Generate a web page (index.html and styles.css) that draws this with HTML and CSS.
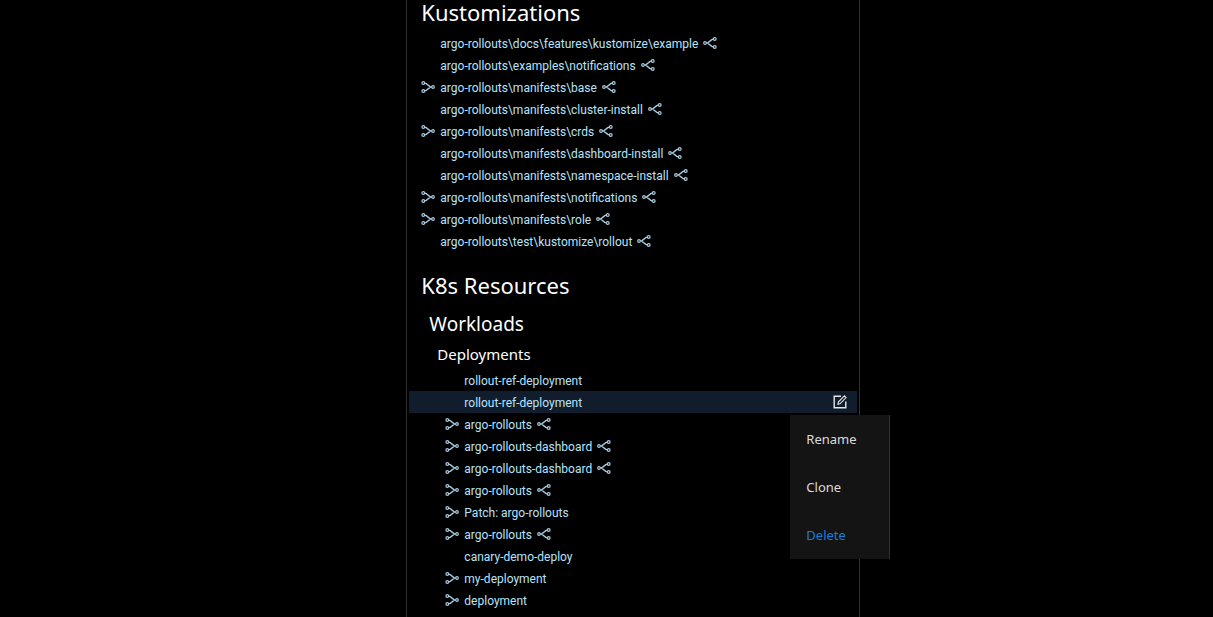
FILE: index.html
```html
<!DOCTYPE html>
<html lang="en">
<head>
<meta charset="utf-8">
<title>Navigator</title>
<link rel="stylesheet" href="styles.css">
</head>
<body>
<svg class="defs" aria-hidden="true">
  <symbol id="out" viewBox="0 0 14 12">
    <g fill="none" stroke="currentColor" stroke-width="1.2">
      <circle cx="2" cy="6" r="1.3"/><circle cx="11.700" cy="2" r="1.4"/><circle cx="11.700" cy="10" r="1.4"/>
      <path stroke-width="1.400" d="M3.300 6H4.500L8.800 2.600L10.300 2.100M4.500 6L8.800 9.400L10.300 9.900"/>
    </g>
  </symbol>
  <symbol id="in" viewBox="0 0 14 12">
    <g fill="none" stroke="currentColor" stroke-width="1.2">
      <circle cx="12" cy="6" r="1.3"/><circle cx="2.300" cy="2" r="1.4"/><circle cx="2.300" cy="10" r="1.4"/>
      <path stroke-width="1.400" d="M10.700 6H9.500L5.200 2.600L3.700 2.100M9.500 6L5.200 9.400L3.700 9.900"/>
    </g>
  </symbol>
</svg>
<main class="panel">
  <section class="section">
    <h1 class="title">Kustomizations</h1>
    <ul class="list" id="kustomizations"></ul>
  </section>
  <section class="section">
    <h1 class="title">K8s Resources</h1>
    <h2 class="subtitle">Workloads</h2>
    <h3 class="kind">Deployments</h3>
    <ul class="list nested" id="deployments"></ul>
  </section>
</main>
<script src="app.js"></script>
</body>
</html>
```
FILE: styles.css
```css
* { box-sizing: border-box; }
body {
  margin: 0;
  background: #000;
  color: #fff;
  font-family: "Segoe UI", "Noto Sans", sans-serif;
  font-size: 12px;
}
.defs { display: none; }
.panel {
  width: 454px;
  min-height: 100vh;
  margin-left: 33.5%;
  padding: 0 2px;
  border: solid #303030;
  border-width: 0 1px;
}
.title, .subtitle, .kind { margin: 0; font-weight: 400; }
.title { padding-left: 12px; font-size: 22px; line-height: 24px; margin-bottom: 8px; }
.section + .section { margin-top: 21px; }
.section + .section .title { margin-bottom: 11px; }
.subtitle { padding-left: 20px; font-size: 19px; line-height: 32px; }
.kind { padding-left: 28px; font-size: 15px; line-height: 29px; }
.list { margin: 0; padding: 0; list-style: none; }
.row {
  position: relative;
  display: flex;
  align-items: center;
  height: 22px;
  padding: 0 10px 0 12px;
  color: #b7e3fa;
}
.nested .row { padding-left: 36px; }
.slot { display: flex; width: 19px; }
.link { width: 14px; height: 12px; color: #a8cbdf; }
.name {
  margin-right: 5px;
  padding-top: 2px;
  color: inherit;
  font-family: "Segoe UI", Roboto, sans-serif;
  line-height: 20px;
  text-decoration: none;
  white-space: nowrap;
}
.selected { background: #111d2c; }
.edit {
  margin-left: auto;
  padding: 0;
  border: 0;
  background: none;
  color: #e6e6e6;
  line-height: 0;
}
.edit svg { width: 14px; height: 14px; }
.menu {
  position: absolute;
  top: 24px;
  right: -33px;
  z-index: 1;
  width: 100px;
  background: #141414;
  border-right: 1px solid #303030;
}
.item {
  display: block;
  width: 100%;
  height: 48px;
  padding: 0 16px;
  border: 0;
  background: none;
  color: #dbdbdb;
  font: inherit;
  font-size: 13px;
  text-align: left;
}
.danger { color: #177ddc; }
```
FILE: app.js
```js
const kustomizations = [
  ['docs\\features\\kustomize\\example', 0, 1],
  ['examples\\notifications', 0, 1],
  ['manifests\\base', 1, 1],
  ['manifests\\cluster-install', 0, 1],
  ['manifests\\crds', 1, 1],
  ['manifests\\dashboard-install', 0, 1],
  ['manifests\\namespace-install', 0, 1],
  ['manifests\\notifications', 1, 1],
  ['manifests\\role', 1, 1],
  ['test\\kustomize\\rollout', 0, 1]
].map(([path, i, o]) => ['argo-rollouts\\' + path, i, o]);
const deployments = [
  ['rollout-ref-deployment', 0, 0],
  ['rollout-ref-deployment', 0, 0, true],
  ['argo-rollouts', 1, 1],
  ['argo-rollouts-dashboard', 1, 1],
  ['argo-rollouts-dashboard', 1, 1],
  ['argo-rollouts', 1, 1],
  ['Patch: argo-rollouts', 1, 0],
  ['argo-rollouts', 1, 1],
  ['canary-demo-deploy', 0, 0],
  ['my-deployment', 1, 0],
  ['deployment', 1, 0]
];
const icon = id => `<svg class="link" aria-hidden="true"><use href="#${id}"/></svg>`;
const actions = `<button class="edit" aria-label="Resource actions"><svg viewBox="0 0 14 14" fill="none" stroke="currentColor"><path stroke-width="1.4" d="M8 1.200H1.200V12.800H12.800V6.500"/><path stroke-width="1.100" d="M5 9.200L5.300 7L11.400 .9L13.100 2.600L7 8.800Z"/></svg></button>
<div class="menu"><button class="item">Rename</button><button class="item">Clone</button><button class="item danger">Delete</button></div>`;
const row = ([name, incoming, outgoing, selected]) =>
  `<li class="row${selected ? ' selected' : ''}"><span class="slot">${incoming ? icon('in') : ''}</span><a class="name" href="#">${name}</a>${outgoing ? icon('out') : ''}${selected ? actions : ''}</li>`;
document.getElementById('kustomizations').innerHTML = kustomizations.map(row).join('');
document.getElementById('deployments').innerHTML = deployments.map(row).join('');
```
